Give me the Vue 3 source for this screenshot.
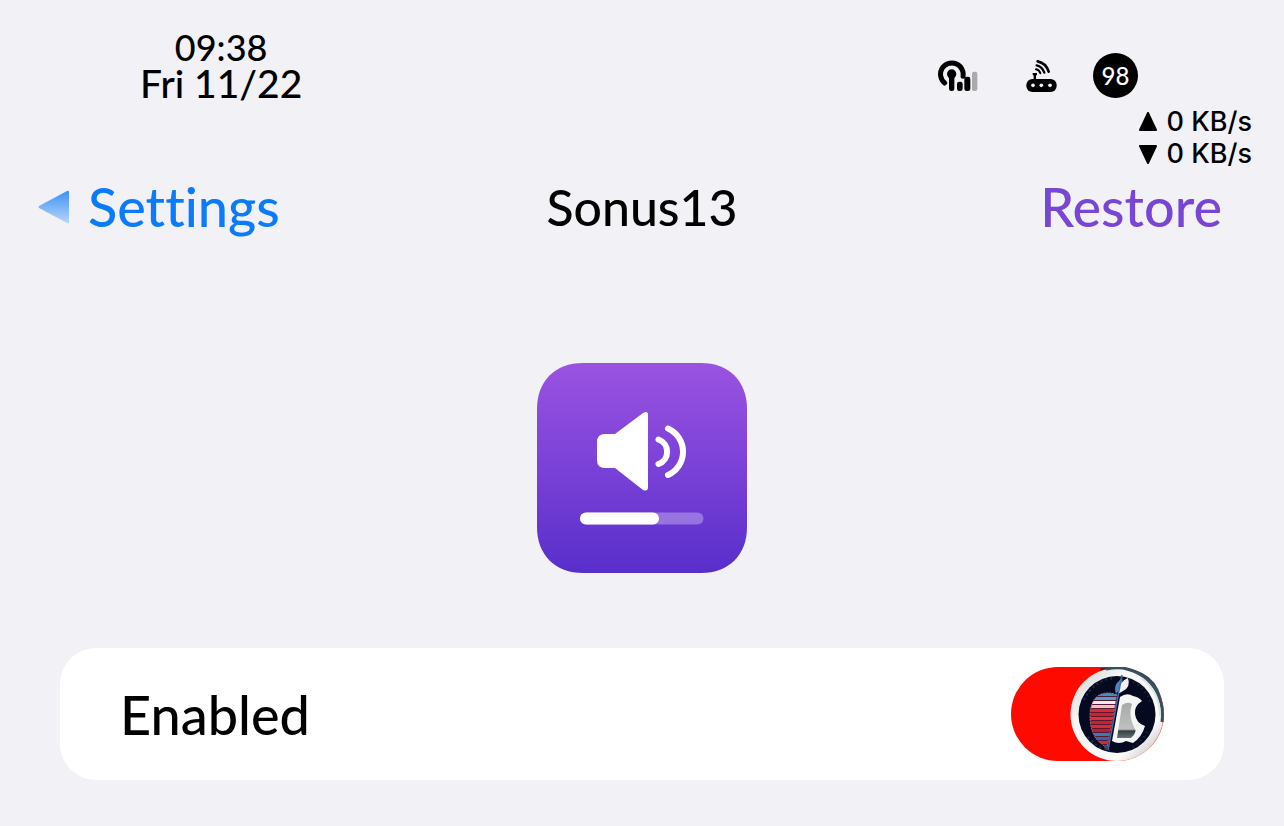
<script setup>
import { ref } from 'vue'

const enabled = ref(true)
const rates = [
  { name: 'Upload', points: '8,1 16,18 0,18' },
  { name: 'Download', points: '0,2 16,2 8,19' }
]
const stripes = [
  { y: 26, color: '#3d8fc4' },
  { y: 30, color: '#4a9fd0' },
  { y: 34, color: '#f4e9ec' },
  { y: 38, color: '#e8c4c8' },
  { y: 42, color: '#dc2a30' },
  { y: 46, color: '#cc242c' },
  { y: 50, color: '#e03038' },
  { y: 54, color: '#c4222c' },
  { y: 58, color: '#d82c34' },
  { y: 62, color: '#b02038' },
  { y: 66, color: '#3f78b8' },
  { y: 70, color: '#2f68ac' },
  { y: 74, color: '#c03040' },
  { y: 78, color: '#2a4f88' }
]
</script>

<template>
  <div class="page">
    <header class="status">
      <div class="clock">
        <time class="time">09:38</time>
        <span class="date">Fri 11/22</span>
      </div>
      <div class="indicators">
        <div class="icons">
          <svg class="signal" viewBox="51 60 126 96" aria-label="Cellular signal">
            <path d="M74 129A34 34 0 1 1 129 109" fill="none" stroke="#000" stroke-width="15" stroke-linecap="round" />
            <circle cx="95" cy="102" r="14" />
            <rect x="87" y="100" width="16" height="53" rx="7" />
            <rect x="111" y="125" width="17" height="28" rx="7" />
            <rect x="133" y="110" width="18" height="43" rx="7" />
            <rect x="156" y="95" width="16" height="58" rx="6" fill="#aaa9ae" />
          </svg>
          <svg class="router" viewBox="315 54 99 102" aria-label="Hotspot">
            <rect x="319" y="114" width="91" height="39" rx="18" />
            <path d="M338 96H351V101L348 104V116H341V104L338 101Z" />
            <g fill="none" stroke="#000" stroke-linecap="round">
              <path d="M353 61Q378 66 386 92" stroke-width="8" />
              <path d="M350 73Q367 77 373 95" stroke-width="7" />
              <path d="M348 85Q358 87 361 97" stroke-width="6" />
            </g>
            <g fill="#f2f1f6">
              <circle cx="339" cy="133" r="5.5" />
              <circle cx="364" cy="133" r="5.5" />
              <circle cx="390" cy="133" r="5.5" />
            </g>
          </svg>
          <span class="battery">98</span>
        </div>
        <ul class="rates">
          <li v-for="rate in rates" :key="rate.name">
            <svg viewBox="-1 0 18 20" :aria-label="rate.name">
              <polygon :points="rate.points" stroke="#000" stroke-width="2" stroke-linejoin="round" />
            </svg>
            <span>0 KB/s</span>
          </li>
        </ul>
      </div>
    </header>

    <nav class="bar">
      <a class="back" href="#">
        <svg viewBox="0 0 32 34" aria-hidden="true">
          <defs>
            <linearGradient id="arrow" x1="0" y1="0" x2="0" y2="1">
              <stop offset="0" stop-color="#3d91f5" />
              <stop offset="1" stop-color="#b9d5f8" />
            </linearGradient>
          </defs>
          <path d="M1 16L29 1Q31 0 31 2V32Q31 34 29 33L1 18Q0 17 1 16Z" fill="url(#arrow)" />
        </svg>
        <span>Settings</span>
      </a>
      <h1>Sonus13</h1>
      <button class="restore" type="button">Restore</button>
    </nav>

    <main>
      <svg class="app-icon" viewBox="0 0 210 210" role="img" aria-label="Sonus13">
        <defs>
          <linearGradient id="purple" x1="0" y1="0" x2="0" y2="1">
            <stop offset="0" stop-color="#9a53e1" />
            <stop offset="0.5" stop-color="#7a41d7" />
            <stop offset="1" stop-color="#582ecb" />
          </linearGradient>
        </defs>
        <path d="M46 0H164C192 0 210 18 210 46V164C210 192 192 210 164 210H46C18 210 0 192 0 164V46C0 18 18 0 46 0Z" fill="url(#purple)" />
        <path d="M68 71H78L106 50Q111 47 111 52V124Q111 129 106 127L78 105H68Q60 105 60 97V79Q60 71 68 71Z" fill="#fff" />
        <g fill="none" stroke="#fff" stroke-width="5.5" stroke-linecap="round">
          <path d="M121.500 76.500A13 13 0 0 1 121.500 101" stroke-width="6" />
          <path d="M131 65.500A25.500 25.500 0 0 1 131 112" stroke-width="6" />
        </g>
        <rect x="43" y="149.500" width="123.500" height="12" rx="6" fill="#fff" opacity="0.3" />
        <rect x="43" y="149.500" width="79" height="12" rx="6" fill="#fff" />
      </svg>

      <section class="card">
        <label for="enabled">Enabled</label>
        <span class="switch" :class="{ on: enabled }">
          <input id="enabled" v-model="enabled" type="checkbox" role="switch">
          <svg class="knob" viewBox="60 0 94 94" aria-hidden="true">
            <defs>
              <linearGradient id="rim" x1="0" y1="0" x2="1" y2="1">
                <stop offset="0" stop-color="#c8c9cc" />
                <stop offset="0.3" stop-color="#f6f6f6" />
                <stop offset="0.75" stop-color="#fafafa" />
                <stop offset="1" stop-color="#a9a9aa" />
              </linearGradient>
              <linearGradient id="edge" x1="0" y1="0" x2="1" y2="1">
                <stop offset="0" stop-color="#701820" />
                <stop offset="0.35" stop-color="#142c3e" />
                <stop offset="0.6" stop-color="#3d5363" />
                <stop offset="1" stop-color="#c9b4b4" />
              </linearGradient>
              <linearGradient id="steel" x1="0" y1="0" x2="0" y2="1">
                <stop offset="0" stop-color="#a7a9a9" />
                <stop offset="0.75" stop-color="#bfc1c0" />
                <stop offset="0.8" stop-color="#33403f" />
                <stop offset="1" stop-color="#657372" />
              </linearGradient>
              <clipPath id="half">
                <path d="M107 28L97 83Q93 77 89 75Q80 66 80 49Q80 34 89 28Q98 24 107 28Z" />
              </clipPath>
            </defs>
            <path d="M90 1Q105 0 116 1Q154 7 153 48Q151 64 142 76L104 47Z" fill="url(#edge)" />
            <circle cx="107" cy="47.500" r="46.500" fill="url(#rim)" />
            <path d="M96 2Q105 0 113 1Q137 6 147 25Q154 39 152 55" fill="none" stroke="#3c505c" stroke-width="3" />
            <path d="M131 11Q150 25 150 49" fill="none" stroke="#dfe5e8" stroke-width="2" />
            <circle cx="107" cy="47.500" r="38.500" fill="#060a20" />
            <path d="M74 33Q84 13 104 11M78 70Q87 81 100 84" fill="none" stroke="#1e2a50" stroke-width="2" stroke-dasharray="2 3" />
            <path d="M119 13Q135 19 140 35M137 65Q131 77 119 82" fill="none" stroke="#21324b" stroke-width="2" stroke-dasharray="1 4" />
            <g clip-path="url(#half)">
              <rect x="79" y="22" width="30" height="62" fill="#5a1830" />
              <rect v-for="stripe in stripes" :key="stripe.y" x="79" :y="stripe.y" width="30" height="3" :fill="stripe.color" />
            </g>
            <path d="M107 28Q98 24 89 28Q80 34 80 49Q80 66 89 75Q93 77 97 83" fill="none" stroke="#a87580" stroke-width="1" stroke-dasharray="2 1" />
            <path d="M110 30Q117 25 123 29Q129 30 132 34Q124 39 125 47Q126 56 135 59Q132 70 123 76L116 74Q109 78 102 74Z" fill="#f4f5f5" />
            <path d="M112 38Q118 34 122 37Q118 48 124 60Q128 65 121 71L107 71Z" fill="url(#steel)" />
            <path d="M106 27Q103 18 109 14Q111 12 112 9Q114 18 106 27Z" fill="#4f83bd" />
            <path d="M108 27Q109 14 118 11Q121 20 113 24Z" fill="#eef0f2" />
            <path d="M112 8L108 29L98 83" fill="none" stroke="#416ba6" stroke-width="1.500" />
            <path d="M106 34L97 80" fill="none" stroke="#e64a50" stroke-width="1" stroke-dasharray="2 2" />
          </svg>
        </span>
      </section>
    </main>
  </div>
</template>

<style>
body {
  background: #f2f1f6;
}
</style>

<style scoped>
.page {
  min-height: 100vh;
  box-sizing: border-box;
  background: #f2f1f6;
  color: #000;
  font-family: Lato, "Open Sans", sans-serif;
  font-weight: 500;
  font-variant-ligatures: none;
}

.status {
  display: flex;
  justify-content: space-between;
  padding: 29px 32px 0 140px;
}

.clock {
  display: flex;
  flex-direction: column;
  align-items: center;
  line-height: 36px;
}

.time {
  font-size: 36px;
}

.date {
  font-size: 39px;
}

.indicators {
  display: flex;
  flex-direction: column;
  align-items: flex-end;
  padding-top: 24px;
}

.icons {
  display: flex;
  align-items: center;
  margin-right: 114px;
}

.signal {
  width: 42px;
  height: 32px;
  margin-right: 46px;
}

.router {
  width: 33px;
  height: 34px;
  margin-right: 35px;
}

.battery {
  width: 45px;
  height: 45px;
  border-radius: 50%;
  background: #000;
  color: #fff;
  font-size: 24px;
  line-height: 45px;
  text-align: center;
}

.rates {
  margin: 8px 0 0;
  padding: 0;
  list-style: none;
  font: 500 27px/32px Inter, sans-serif;
}

.rates li {
  display: flex;
  align-items: center;
  gap: 10px;
}

.rates svg {
  width: 18px;
  height: 20px;
}

.bar {
  display: grid;
  grid-template-columns: 1fr auto 1fr;
  align-items: center;
  padding: 5px 38px 0;
  font-size: 54px;
  line-height: 64px;
}

.back {
  display: flex;
  align-items: center;
  gap: 18px;
  color: #0a7cfb;
  text-decoration: none;
}

.back svg {
  width: 32px;
  height: 34px;
}

h1 {
  margin: 0;
  font-size: 50px;
  font-weight: inherit;
}

.restore {
  justify-self: end;
  margin-right: 24px;
  padding: 0;
  border: 0;
  background: none;
  color: #7845d5;
  font: inherit;
  cursor: pointer;
}

main {
  display: flex;
  flex-direction: column;
  align-items: center;
  gap: 75px;
  padding: 124px 60px 46px;
}

.app-icon {
  width: 210px;
  height: 210px;
}

.card {
  align-self: stretch;
  display: flex;
  align-items: center;
  justify-content: space-between;
  padding: 19px 60px;
  border-radius: 36px;
  background: #fff;
  font-size: 54px;
}

.switch {
  position: relative;
  width: 153px;
  height: 94px;
}

.switch input {
  appearance: none;
  display: block;
  width: 153px;
  height: 94px;
  margin: 0;
  border-radius: 47px;
  background: #e9e9eb;
  cursor: pointer;
}

.switch input:checked {
  background: #ff0a00;
}

.knob {
  position: absolute;
  top: 0;
  left: 0;
  width: 94px;
  height: 94px;
  pointer-events: none;
}

.on .knob {
  left: auto;
  right: 0;
}
</style>
